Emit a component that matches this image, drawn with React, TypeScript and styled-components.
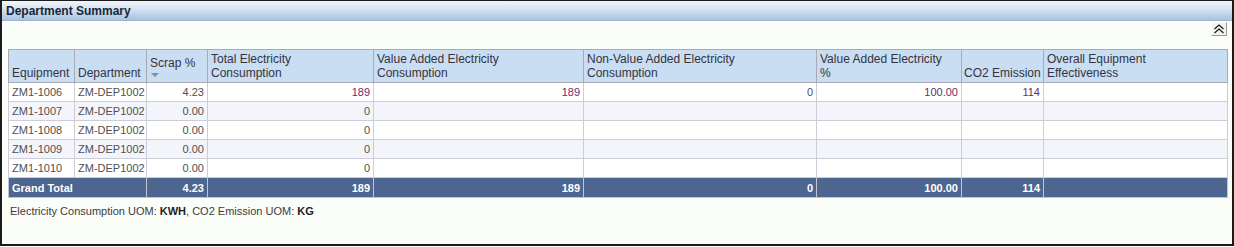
import styled, { createGlobalStyle } from "styled-components";

const GlobalStyle = createGlobalStyle`
  html, body {
    margin: 0;
    padding: 0;
    background: #ffffff;
  }

  body {
    font-family: "Liberation Sans", Arial, sans-serif;
  }
`;

interface Column {
  lines: string[];
  width: number;
  sorted?: boolean;
}

interface Row {
  equipment: string;
  department: string;
  values: { text: string; link?: boolean }[];
}

const COLUMNS: Column[] = [
  { lines: ["Equipment"], width: 66 },
  { lines: ["Department"], width: 72 },
  { lines: ["Scrap %"], width: 61, sorted: true },
  { lines: ["Total Electricity", "Consumption"], width: 166 },
  { lines: ["Value Added Electricity", "Consumption"], width: 210 },
  { lines: ["Non-Value Added Electricity", "Consumption"], width: 233 },
  { lines: ["Value Added Electricity", "%"], width: 145 },
  { lines: ["CO2 Emission"], width: 82 },
  { lines: ["Overall Equipment", "Effectiveness"], width: 184 },
];

const emptyRest = [{ text: "" }, { text: "" }, { text: "" }, { text: "" }, { text: "" }];

const ROWS: Row[] = [
  {
    equipment: "ZM1-1006",
    department: "ZM-DEP1002",
    values: [
      { text: "4.23" },
      { text: "189", link: true },
      { text: "189", link: true },
      { text: "0" },
      { text: "100.00", link: true },
      { text: "114", link: true },
      { text: "" },
    ],
  },
  ...["1007", "1008", "1009", "1010"].map((id) => ({
    equipment: `ZM1-${id}`,
    department: "ZM-DEP1002",
    values: [{ text: "0.00" }, { text: "0" }, ...emptyRest],
  })),
];

const TOTALS = ["4.23", "189", "189", "0", "100.00", "114", ""];

const Frame = styled.div`
  box-sizing: border-box;
  width: 1234px;
  height: 246px;
  border: 2px solid #1c1c1c;
  border-top-width: 1px;
  background: #fbfdf9;
  display: flex;
  flex-direction: column;
`;

const TitleBar = styled.div`
  height: 19px;
  padding-left: 4px;
  display: flex;
  align-items: center;
  background: linear-gradient(#f1f5fa 0%, #d3e1f0 45%, #a9c3e0 100%);
  border-bottom: 1px solid #9fb6d2;
  color: #16263c;
  font-size: 12px;
  font-weight: bold;
`;

const Body = styled.div`
  padding: 0 5px 0 6px;
  display: flex;
  flex-direction: column;
`;

const Toolbar = styled.div`
  height: 27px;
  display: flex;
  justify-content: flex-end;
  align-items: flex-start;
  padding-top: 1px;
`;

const CollapseButton = styled.button`
  box-sizing: border-box;
  width: 16px;
  height: 14px;
  margin: 0;
  padding: 0;
  display: flex;
  align-items: center;
  justify-content: center;
  background: #f2f2f0;
  border: 1px solid;
  border-color: #ffffff #9a9a9a #9a9a9a #ffffff;
  cursor: pointer;
`;

const Table = styled.table`
  width: 1219px;
  table-layout: fixed;
  border-collapse: collapse;
  font-family: "Liberation Sans", Arial, sans-serif;
`;

const HeadCell = styled.th`
  box-sizing: border-box;
  height: 33px;
  padding: 0 1px 2px 3px;
  background: #c9ddf3;
  border: 1px solid #a9a9b6;
  color: #34343e;
  font-size: 12px;
  font-weight: normal;
  text-align: left;
  vertical-align: bottom;
  line-height: 14px;
  white-space: nowrap;
  overflow: hidden;

  &.tight {
    padding-left: 2px;
    padding-right: 0;
  }
`;

const HeadLine = styled.span`
  display: block;
`;

const SortMark = styled.span`
  display: block;
  width: 0;
  height: 0;
  margin: 3px 0 3px 1px;
  border-left: 4px solid transparent;
  border-right: 4px solid transparent;
  border-top: 4px solid #8a8a94;
`;

const DataRow = styled.tr<{ $shaded: boolean }>`
  background: ${({ $shaded }) => ($shaded ? "#f4f4fb" : "#ffffff")};
`;

const DataCell = styled.td<{ $align?: "left" | "right"; $link?: boolean }>`
  height: 18px;
  padding: 0 3px;
  border: 1px solid #cdcdda;
  font-size: 11px;
  color: ${({ $link }) => ($link ? "#6a2f6e" : "#505050")};
  text-align: ${({ $align }) => $align || "left"};
  white-space: nowrap;
  overflow: hidden;
`;

const TotalCell = styled.td<{ $align?: "left" | "right" }>`
  height: 19px;
  padding: 0 3px;
  background: #4d668f;
  border: 1px solid #c3c3d2;
  color: #ffffff;
  font-size: 11px;
  font-weight: bold;
  text-align: ${({ $align }) => $align || "left"};
`;

const Footer = styled.div`
  margin-top: 7px;
  margin-left: 2px;
  font-size: 11px;
  color: #3c3c3c;

  b {
    color: #1e1e1e;
  }
`;

const DoubleChevron = () => (
  <svg width="12" height="10" viewBox="0 0 12 10">
    <path d="M1.5 5 L6 1 L10.5 5" fill="none" stroke="#1a1a1a" strokeWidth="1.2" />
    <path d="M1.5 9 L6 5 L10.5 9" fill="none" stroke="#1a1a1a" strokeWidth="1.2" />
  </svg>
);

const App = () => {
  return (
    <>
      <GlobalStyle />
      <Frame>
        <TitleBar>Department Summary</TitleBar>
        <Body>
          <Toolbar>
            <CollapseButton aria-label="Collapse">
              <DoubleChevron />
            </CollapseButton>
          </Toolbar>
          <Table>
            <colgroup>
              {COLUMNS.map((col) => (
                <col key={col.lines.join(" ")} style={{ width: col.width }} />
              ))}
            </colgroup>
            <thead>
              <tr>
                {COLUMNS.map((col) => (
                  <HeadCell
                    key={col.lines.join(" ")}
                    className={col.lines[0] === "CO2 Emission" ? "tight" : undefined}
                  >
                    {col.lines.map((line) => (
                      <HeadLine key={line}>{line}</HeadLine>
                    ))}
                    {col.sorted && <SortMark />}
                  </HeadCell>
                ))}
              </tr>
            </thead>
            <tbody>
              {ROWS.map((row, i) => (
                <DataRow key={row.equipment} $shaded={i % 2 === 1}>
                  <DataCell>{row.equipment}</DataCell>
                  <DataCell>{row.department}</DataCell>
                  {row.values.map((v, j) => (
                    <DataCell key={j} $align="right" $link={v.link}>
                      {v.text}
                    </DataCell>
                  ))}
                </DataRow>
              ))}
              <tr>
                <TotalCell colSpan={2}>Grand Total</TotalCell>
                {TOTALS.map((t, j) => (
                  <TotalCell key={j} $align="right">
                    {t}
                  </TotalCell>
                ))}
              </tr>
            </tbody>
          </Table>
          <Footer>
            Electricity Consumption UOM: <b>KWH</b>, CO2 Emission UOM: <b>KG</b>
          </Footer>
        </Body>
      </Frame>
    </>
  );
};

export default App;
